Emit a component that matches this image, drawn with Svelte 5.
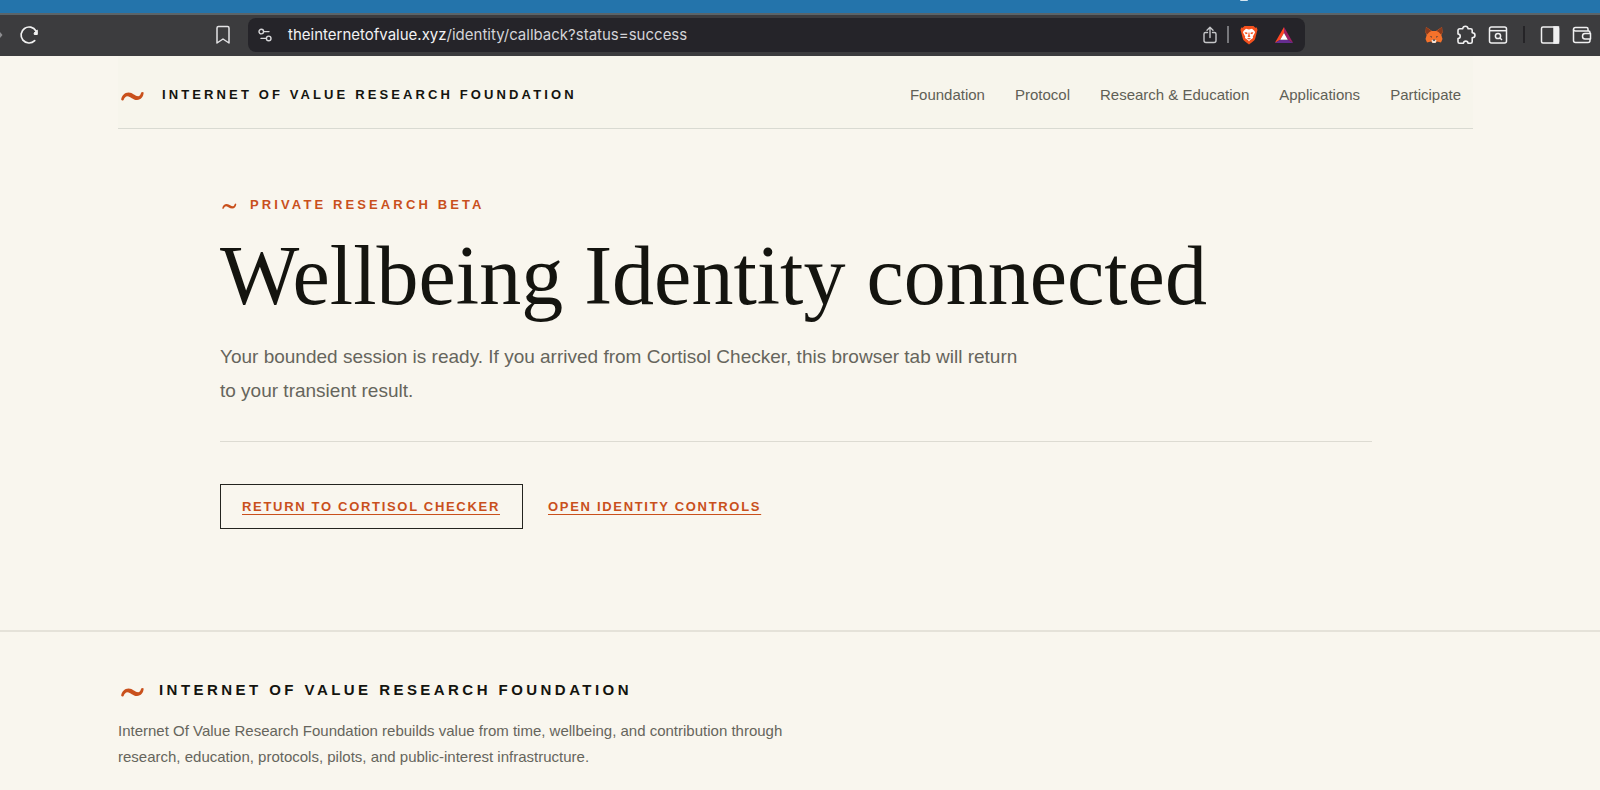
<script>
  const host = 'theinternetofvalue.xyz';
  const path = '/identity/callback?status=success';
  const brand = 'Internet of Value Research Foundation';

  const navItems = [
    { label: 'Foundation', href: '#foundation' },
    { label: 'Protocol', href: '#protocol' },
    { label: 'Research & Education', href: '#research' },
    { label: 'Applications', href: '#applications' },
    { label: 'Participate', href: '#participate' }
  ];
</script>

{#snippet wave(size)}
  <svg class="wave {size}" viewBox="0 0 28 16" aria-hidden="true">
    <path d="M3.200 11.800C3.500 8 6.500 4.600 10.500 4.600C15 4.700 17.500 8.700 20.500 8.300C22 8 22.600 6.500 23.200 4.600Q24.300 3.400 25.700 4.600C25.400 8.800 23 12 19 12C14.800 12 12.500 8.300 9.500 8.200C7.500 8.200 6.300 10 5.600 12Q4.200 13.200 3.200 11.800Z" fill="#c9501c" />
  </svg>
{/snippet}

<!-- Browser window -->
<div class="desktop"><span class="glint"></span></div>
<div class="toolbar">
  <div class="tools-left">
    <button class="forward" aria-label="Forward">
      <svg width="3" height="8" viewBox="0 0 3 8"><path d="M0 1L2.500 4L0 7Z" fill="#8d8d90" /></svg>
    </button>
    <button aria-label="Reload">
      <svg width="20" height="20" viewBox="0 0 20 20" fill="none" stroke="#f2f2f2" stroke-width="1.700" stroke-linecap="round">
        <path d="M15.700 15.700A8 8 0 1 1 17 6" />
        <path d="M18.300 5.500V9.500H15.300Q14.500 8 16 7Z" fill="#f2f2f2" stroke-width="1" stroke-linejoin="round" />
      </svg>
    </button>
    <button class="bookmark" aria-label="Bookmark this page">
      <svg width="16" height="20" viewBox="0 0 16 20" fill="none" stroke="#e4e4e6" stroke-width="1.500" stroke-linejoin="round">
        <path d="M2 3Q2 1.500 3.500 1.500H12.500Q14 1.500 14 3V18L8 14L2 18Z" />
      </svg>
    </button>
  </div>

  <div class="address">
    <button aria-label="Site settings">
      <svg width="14" height="14" viewBox="0 0 14 14" fill="none" stroke="#d6d6d8" stroke-width="1.400" stroke-linecap="round">
        <circle cx="3.300" cy="3.600" r="2.300" />
        <path d="M6 3.600H11" />
        <circle cx="10.700" cy="10.400" r="2.300" />
        <path d="M3 10.400H8" />
      </svg>
    </button>
    <div class="url">{host}<span>{path}</span></div>
    <button aria-label="Share">
      <svg width="16" height="18" viewBox="0 0 16 18" fill="none" stroke="#c6c6c9" stroke-width="1.400" stroke-linecap="round" stroke-linejoin="round">
        <path d="M5.500 6.500H3.500Q2 6.500 2 8V14.500Q2 16.500 4 16.500H12Q14 16.500 14 14.500V8Q14 6.500 12.500 6.500H10.500" />
        <path d="M8 11.500V1.500M5 4.300L8 1.300L11 4.300" />
      </svg>
    </button>
    <span class="rule light"></span>
    <button class="shield" aria-label="Brave Shields">
      <svg width="18" height="20" viewBox="0 0 18 20">
        <path d="M4.500 1H13.500L15.300 2.800L16.800 2.600L17.500 5L17 6.500L15.300 13.200C14.800 15 13.800 16 12 17.200L9 19.500L6 17.200C4.200 16 3.200 15 2.700 13.200L1 6.500L0.500 5L1.200 2.600L2.700 2.800Z" fill="#f4511e" />
        <path d="M6 3.800L9 4.400L12 3.800L14.500 6L15 7.500L12.800 11.500L13 13L9.800 15.200L9 16.500L8.200 15.200L5 13L5.200 11.500L3 7.500L3.500 6Z" fill="#fff" />
        <path d="M4.500 7.200L7.200 7.400L7.500 8.800L5.800 9.200ZM13.500 7.200L10.800 7.400L10.500 8.800L12.200 9.200ZM8.600 7.500H9.400L9.700 10.500L10.500 11.300L9 12.300L7.500 11.300L8.300 10.500ZM6.800 13.500L9 12.900L11.200 13.500L9 14.600Z" fill="#f4511e" />
      </svg>
    </button>
    <button class="rewards" aria-label="Brave Rewards">
      <svg width="20" height="18" viewBox="0 0 20 18">
        <path d="M10 1L0.800 17L6.200 13.700L10 7Z" fill="#ff4724" />
        <path d="M10 1L19.200 17L13.800 13.700L10 7Z" fill="#9e1f63" />
        <path d="M0.800 17H19.200L13.800 13.700H6.200Z" fill="#662d91" />
        <path d="M10 7L13.800 13.700H6.200Z" fill="#fff" />
      </svg>
    </button>
  </div>

  <div class="tools-right">
    <button aria-label="MetaMask">
      <svg width="20" height="20" viewBox="0 0 20 20">
        <path d="M2 2L8 6H12L18 2L18.500 7.500L17.300 10L18.500 14L17 17.500L13 16.500L11.500 18H8.500L7 16.500L3 17.500L1.500 14L2.700 10L1.500 7.500Z" fill="#f5722b" />
        <path d="M2 2L7.500 6L5.500 7L3 9.500L1.500 7.500ZM18 2L12.500 6L14.500 7L17 9.500L18.500 7.500Z" fill="#8a3a1c" />
        <path d="M5.800 11.300L8 11.600L7.600 12.800ZM14.200 11.300L12 11.600L12.400 12.800Z" fill="#33363f" />
        <path d="M7.500 15.300L8.600 14.800H11.400L12.500 15.300L11.500 18H8.500Z" fill="#f0e4da" />
        <path d="M8.800 14.500H11.200L11 15.800H9Z" fill="#33363f" />
      </svg>
    </button>
    <button aria-label="Extensions">
      <svg width="20" height="20" viewBox="0 0 20 20" fill="none" stroke="#f0f0f1" stroke-width="1.600" stroke-linejoin="round">
        <path d="M3.800 3.800H6.800C6.500 0.300 12.300 0.300 12 3.800H14.700Q16.200 3.800 16.200 5.300V7.800C19.900 7.800 19.900 12.800 16.200 12.800V16.700Q16.200 18.200 14.700 18.200H12C11.700 15.400 7.800 15.400 7.500 18.200H3.500Q2 18.200 2 16.700V13.500C5 13.300 5 9.200 2 9V5.500Q2 3.800 3.800 3.800Z" />
      </svg>
    </button>
    <button aria-label="Search tabs">
      <svg width="20" height="20" viewBox="0 0 20 20" fill="none" stroke="#f0f0f1" stroke-width="1.500">
        <rect x="1.500" y="2" width="17" height="16" rx="2" />
        <path d="M2 5.700H18" />
        <circle cx="10" cy="11" r="2.600" />
        <path d="M12 13L14 15" />
      </svg>
    </button>
    <span class="rule dark"></span>
    <button aria-label="Sidebar">
      <svg width="20" height="20" viewBox="0 0 20 20" fill="none" stroke="#f0f0f1" stroke-width="1.500">
        <rect x="1.500" y="2" width="17" height="16" rx="1.500" />
        <path d="M14 2H18.500V18H14Z" fill="#f0f0f1" />
      </svg>
    </button>
    <button aria-label="Wallet">
      <svg width="20" height="20" viewBox="0 0 20 20" fill="none" stroke="#f0f0f1" stroke-width="1.500" stroke-linejoin="round">
        <path d="M16 6V4Q16 2.500 14.500 2.500H3.500Q1.500 2.500 1.500 4.500V15.500Q1.500 17.500 3.500 17.500H16Q18 17.500 18 15.500V14" />
        <path d="M1.500 4.500Q1.500 6 3.500 6H16.500Q18 6 18 7.500V8.500" />
        <path d="M18.500 8.500H13Q10.500 8.500 10.500 11.200Q10.500 14 13 14H18.500Z" />
      </svg>
    </button>
  </div>
</div>

<div class="page">
  <header class="site-header">
    <a class="brand" href="#home">{@render wave('large')}<span>{brand}</span></a>
    <nav>
      {#each navItems as item}
        <a href={item.href}>{item.label}</a>
      {/each}
    </nav>
  </header>

  <main>
    <p class="eyebrow">{@render wave('small')}<span>Private research beta</span></p>
    <h1>Wellbeing Identity connected</h1>
    <p class="lead">
      Your bounded session is ready. If you arrived from Cortisol Checker, this browser tab will
      return to your transient result.
    </p>
    <div class="actions">
      <a class="boxed" href="#checker">Return to Cortisol Checker</a>
      <a href="#controls">Open identity controls</a>
    </div>
  </main>

  <footer>
    <div class="footer-inner">
      <a class="brand footer-brand" href="#home">{@render wave('large')}<span>{brand}</span></a>
      <p>
        Internet Of Value Research Foundation rebuilds value from time, wellbeing, and contribution
        through research, education, protocols, pilots, and public-interest infrastructure.
      </p>
    </div>
  </footer>
</div>

<style>
  :global(body) {
    background: #f9f6ee;
    overflow: hidden;
  }

  /* === BROWSER === */
  .desktop {
    display: flex;
    height: 13px;
    background: #2474ab;
  }

  .glint {
    width: 8px;
    height: 1px;
    margin-left: 77.5%;
    border-radius: 0 0 4px 4px;
    background: #d5e6f0;
  }

  .toolbar {
    display: flex;
    align-items: center;
    box-sizing: border-box;
    height: 43px;
    padding: 2px 8px 4px 0;
    border-top: 2px solid #5b6468;
    background: #3c3c3e;
  }

  .toolbar button {
    display: flex;
    padding: 0;
    border: none;
    background: none;
    cursor: pointer;
  }

  .tools-left {
    display: flex;
    align-items: center;
    gap: 16px;
    width: 231px;
    padding-right: 17px;
  }

  .tools-left .bookmark {
    margin-left: auto;
  }

  .address {
    display: flex;
    flex: 1;
    align-items: center;
    box-sizing: border-box;
    height: 34px;
    padding: 0 11px 0 10px;
    border-radius: 8px;
    background: #252429;
  }

  .url {
    flex: 1;
    margin-left: 16px;
    font: 15px Inter, "Liberation Sans", sans-serif;
    color: #f1f1f3;
  }

  .url span {
    color: #d4d4d8;
  }

  .rule {
    width: 2px;
    height: 17px;
  }

  .rule.light {
    margin: 0 11px 0 9px;
    background: #77777b;
  }

  .rule.dark {
    background: #252427;
  }

  .rewards {
    margin-left: 16px;
  }

  .tools-right {
    display: flex;
    align-items: center;
    justify-content: flex-end;
    gap: 12px;
    width: 287px;
  }

  .tools-right .rule {
    margin: 0 3px;
  }

  /* === SITE === */
  .page {
    font-family: "Helvetica Neue", "Liberation Sans", Arial, sans-serif;
    color: #14140f;
  }

  .site-header {
    display: flex;
    align-items: center;
    justify-content: space-between;
    box-sizing: border-box;
    height: 73px;
    margin: 0 127px 0 118px;
    padding: 4px 12px 0 0;
    border-bottom: 1px solid #d9dad2;
    background: #f7f5ec;
  }

  .wave {
    flex: none;
  }

  .wave.large {
    width: 28px;
    height: 16px;
    margin-top: 3px;
  }

  .wave.small {
    width: 18px;
    height: 10px;
    margin-top: 1px;
  }

  .brand {
    display: flex;
    align-items: center;
    gap: 16px;
    font-size: 13px;
    font-weight: 700;
    letter-spacing: 0.24em;
    text-transform: uppercase;
    text-decoration: none;
    color: #14140f;
  }

  nav {
    display: flex;
    gap: 30px;
  }

  nav a {
    font-size: 15px;
    text-decoration: none;
    color: #5f6056;
  }

  main {
    margin: 0 228px 0 220px;
    padding: 68px 0 101px;
  }

  .eyebrow {
    display: flex;
    align-items: center;
    gap: 12px;
    margin: 0;
    font-size: 13px;
    line-height: 16px;
    font-weight: 700;
    letter-spacing: 0.24em;
    text-transform: uppercase;
    color: #c9501c;
  }

  h1 {
    margin: 19px 0 20px;
    font: 400 84px/88px Georgia, "Liberation Serif", serif;
  }

  .lead {
    max-width: 808px;
    margin: 0;
    font-size: 19px;
    line-height: 34px;
    color: #66655c;
  }

  .actions {
    display: flex;
    align-items: center;
    gap: 25px;
    margin-top: 33px;
    padding-top: 42px;
    border-top: 1px solid #dddbd2;
  }

  .actions a {
    font-size: 13px;
    line-height: 16px;
    font-weight: 700;
    letter-spacing: 0.13em;
    text-transform: uppercase;
    text-underline-offset: 3px;
    color: #c9501c;
  }

  .actions .boxed {
    padding: 14px 22px 13px 21px;
    border: 1px solid #24241f;
  }

  footer {
    border-top: 2px solid #e5e2d9;
  }

  .footer-inner {
    padding: 48px 118px;
  }

  .footer-brand {
    gap: 13px;
    font-size: 15px;
    line-height: 20px;
    letter-spacing: 0.23em;
  }

  footer p {
    max-width: 680px;
    margin: 18px 0 0;
    font-size: 15px;
    line-height: 26px;
    color: #66655c;
  }
</style>
